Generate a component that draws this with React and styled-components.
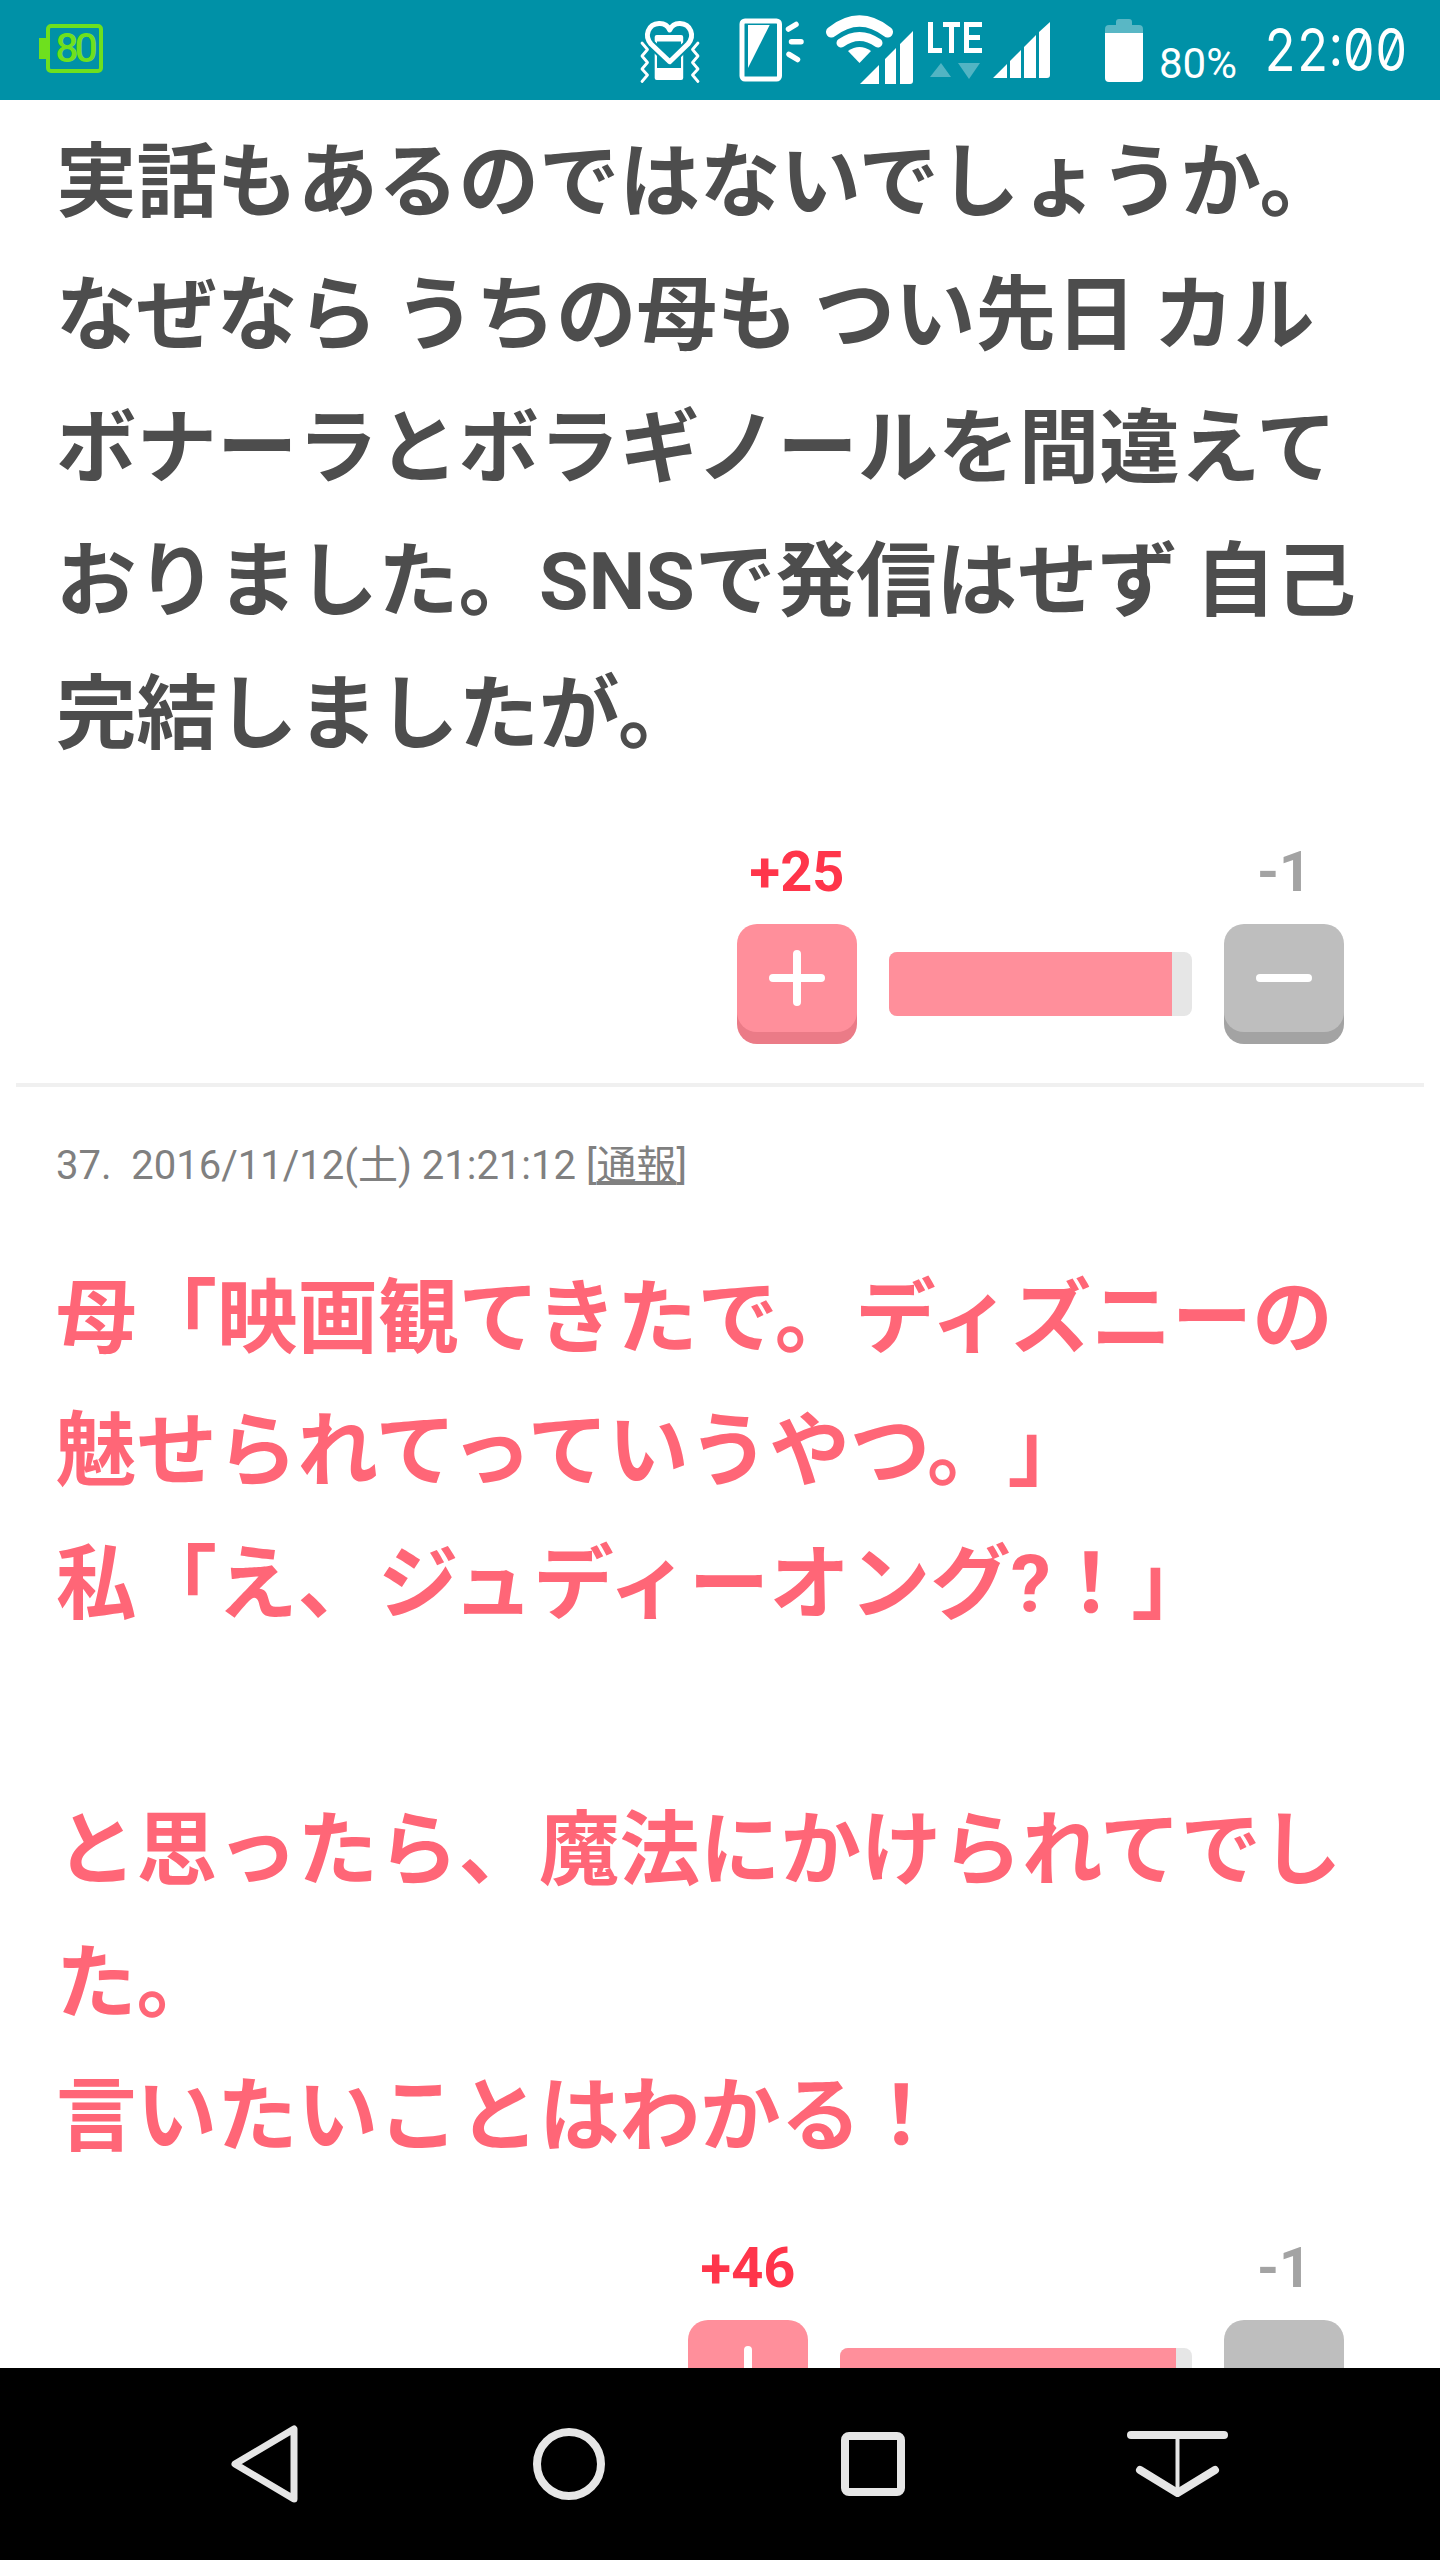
import React from "react";
import styled, { createGlobalStyle } from "styled-components";

const GlobalStyle = createGlobalStyle`
  html, body {
    margin: 0;
    padding: 0;
    background: #fff;
  }
`;

const Screen = styled.div`
  display: flex;
  flex-direction: column;
  width: 1440px;
  height: 2560px;
  overflow: hidden;
  font-family: "Roboto", "Noto Sans CJK JP", sans-serif;
`;

const StatusBar = styled.div`
  flex: none;
  display: flex;
  align-items: flex-start;
  height: 100px;
  padding: 18px 36px 0 39px;
  box-sizing: border-box;
  background: #0091a7;
  color: #fff;
`;

const GreenBattery = styled.div`
  display: flex;
  align-items: center;
  margin-top: 6px;
`;

const BatteryNub = styled.div`
  width: 7px;
  height: 21px;
  background: #6ee01e;
`;

const BatteryBody = styled.div`
  display: flex;
  align-items: center;
  justify-content: center;
  width: 57px;
  height: 49px;
  box-sizing: border-box;
  border: 4px solid #6ee01e;
  border-radius: 5px;
  color: #6ee01e;
  font-size: 41px;
  font-weight: 500;
  letter-spacing: -4px;
  line-height: 1;
`;

const Spacer = styled.div`
  flex: 1;
`;

const StatusIcon = styled.svg`
  flex: none;
  display: block;
  margin-left: ${(props) => props.$ml || 0}px;
  margin-top: ${(props) => props.$mt || 0}px;
`;

const StatusPercent = styled.div`
  margin: 25px 0 0 16px;
  font-size: 42px;
  line-height: 42px;
`;

const StatusClock = styled.div`
  width: 140px;
  margin: 1px 0 0 27px;
  font-family: "Inter", sans-serif;
  font-size: 59px;
  font-weight: 400;
  font-feature-settings: "zero", "tnum";
  line-height: 62px;
  white-space: nowrap;
  transform: scaleX(0.85);
  transform-origin: left center;
`;

const Content = styled.div`
  flex: 1;
  min-height: 0;
  overflow: hidden;
  padding-top: 16px;
`;

const Comment = styled.div`
  margin: 0 0 0 56px;
  color: ${(props) => props.$color};
  font-size: 80.5px;
  font-weight: 700;
  line-height: 133px;
  word-spacing: -3px;
  text-spacing-trim: space-all;
  white-space: nowrap;
`;

const VoteBlock = styled.div`
  display: flex;
  justify-content: flex-end;
  align-items: flex-start;
  gap: 32px;
  padding: ${(props) => props.$top}px 96px 0 0;
`;

const VoteColumn = styled.div`
  display: flex;
  flex-direction: column;
  align-items: center;
  width: 120px;
`;

const VoteCount = styled.div`
  height: 66px;
  margin-bottom: 21px;
  color: ${(props) => props.$color};
  font-size: 56px;
  font-weight: 700;
  line-height: 70px;
`;

const VoteButton = styled.div`
  display: flex;
  align-items: center;
  justify-content: center;
  width: 120px;
  height: 108px;
  border-radius: 20px;
  background: ${(props) => props.$color};
  box-shadow: 0 12px 0 ${(props) => props.$shade};
  margin-bottom: 12px;
`;

const ScoreBar = styled.div`
  flex: none;
  width: ${(props) => props.$width}px;
  height: 64px;
  margin-top: 115px;
  border-radius: 8px;
  overflow: hidden;
  background: #e6e6e6;
`;

const ScoreFill = styled.div`
  height: 100%;
  background: #ff8f9b;
`;

const Divider = styled.div`
  height: 4px;
  margin: 39px 16px 0;
  background: #f0f0f0;
`;

const CommentMeta = styled.div`
  margin: 49px 0 56px 56px;
  color: #808080;
  font-size: 40px;
  line-height: 60px;
  white-space: nowrap;

  & a {
    color: inherit;
    text-decoration: underline;
  }
`;

const NavBar = styled.div`
  flex: none;
  display: flex;
  align-items: center;
  height: 192px;
  padding-left: 230px;
  background: #000;
`;

const NavIcon = styled.svg`
  flex: none;
  display: block;
  margin-left: ${(props) => props.$ml || 0}px;
`;

function HeartPhoneIcon() {
  const heart =
    "M30.700 41.700 12 24C5 16 9 4 20 3.500 25 3.300 29 6 30.700 10 32.500 6 36 3.300 41 3.500 52 4 56 16 49 24z";
  return (
    <StatusIcon width="63" height="64" viewBox="0 0 63 64" $mt={2}>
      <rect x="15.700" y="15" width="28.500" height="45" rx="2" fill="#fff" />
      <rect x="18" y="21.500" width="24" height="26.500" fill="#0091a7" />
      <path d={heart} fill="none" stroke="#0091a7" strokeWidth="9" strokeLinejoin="round" />
      <path d={heart} fill="none" stroke="#fff" strokeWidth="5" strokeLinejoin="round" />
      <path
        d="M3 23l5.500 6.500L3 36l5.500 6.500L3 49l5.500 6L3 61.500M59 23l-5.500 6.500L59 36l-5.500 6.500L59 49l-5.500 6 5.500 6.500"
        fill="none"
        stroke="#fff"
        strokeWidth="2.800"
        strokeLinecap="round"
        strokeLinejoin="round"
      />
    </StatusIcon>
  );
}

function RotateIcon() {
  return (
    <StatusIcon width="65" height="64" viewBox="0 0 65 64" $ml={37}>
      <rect x="3" y="3" width="37.500" height="58" rx="3" fill="none" stroke="#fff" strokeWidth="5" />
      <path d="M9 50V7h21.700z" fill="#fff" />
      <path
        d="M49.500 11 57 6.500M52.500 23.700h9.500M50 36.300 58.500 41.500"
        fill="none"
        stroke="#fff"
        strokeWidth="5.500"
        strokeLinecap="round"
      />
    </StatusIcon>
  );
}

function WifiIcon() {
  return (
    <StatusIcon width="87" height="71" viewBox="0 0 87 71" $ml={22} $mt={-4}>
      <path
        d="M5.500 18Q33.500-4 61.500 18"
        fill="none"
        stroke="#fff"
        strokeWidth="11"
        strokeLinecap="round"
      />
      <path
        d="M15 29Q33.500 16 52 29"
        fill="none"
        stroke="#fff"
        strokeWidth="9"
        strokeLinecap="round"
      />
      <path d="M22 37Q33.500 29 45 37L33.500 49z" fill="#fff" />
      <path
        d="M34 70 53 51v19zM59 45 70 34v36H59zM74 30 87 17v50a3 3 0 0 1-3 3H74z"
        fill="#fff"
      />
    </StatusIcon>
  );
}

function LteIcon() {
  return (
    <StatusIcon width="56" height="60" viewBox="0 0 56 60" $ml={14} $mt={4}>
      <path
        d="M1 0h5v26h9v5H1zM16 0h17v5h-6v26h-5V5h-6zM37 0h18v5H42v8h11v5H42v8h13v5H37z"
        fill="#fff"
      />
      <path d="M14 41l10 14H3z" fill="#fff" opacity="0.32" />
      <path d="M31 41h22L42 57z" fill="#fff" opacity="0.32" />
    </StatusIcon>
  );
}

function SignalIcon() {
  return (
    <StatusIcon width="58" height="57" viewBox="0 0 58 57" $ml={10} $mt={4}>
      <path
        d="M0 56 14 42v14zM17 39 28 28v28H17zM31 25 43 13v43H31zM46 10 57 0v53a3 3 0 0 1-3 3h-8z"
        fill="#fff"
      />
    </StatusIcon>
  );
}

function PhoneBatteryIcon() {
  return (
    <StatusIcon width="38" height="63" viewBox="0 0 38 63" $ml={54} $mt={1}>
      <path
        d="M11 3a3 3 0 0 1 3-3h10a3 3 0 0 1 3 3v3h7a4 4 0 0 1 4 4v4H0v-4a4 4 0 0 1 4-4h7z"
        fill="#fff"
        opacity="0.35"
      />
      <path d="M0 14h38v45a4 4 0 0 1-4 4H4a4 4 0 0 1-4-4z" fill="#fff" />
    </StatusIcon>
  );
}

function BackIcon() {
  return (
    <NavIcon width="68" height="78" viewBox="0 0 68 78" fill="none">
      <path d="M64 4v70L5 39z" stroke="#e6e6e6" strokeWidth="7" strokeLinejoin="round" />
    </NavIcon>
  );
}

function HomeIcon() {
  return (
    <NavIcon width="72" height="72" viewBox="0 0 72 72" fill="none" $ml={235}>
      <circle cx="36" cy="36" r="32" stroke="#e6e6e6" strokeWidth="8" />
    </NavIcon>
  );
}

function RecentsIcon() {
  return (
    <NavIcon width="64" height="64" viewBox="0 0 64 64" fill="none" $ml={236}>
      <rect x="4" y="4" width="56" height="56" rx="4" stroke="#e6e6e6" strokeWidth="8" />
    </NavIcon>
  );
}

function HideBarIcon() {
  return (
    <NavIcon width="101" height="66" viewBox="0 0 101 66" fill="none" $ml={222}>
      <path d="M4 4h93" stroke="#e6e6e6" strokeWidth="8" strokeLinecap="round" />
      <path d="M50.500 8v52" stroke="#e6e6e6" strokeWidth="4" />
      <path d="M13 39 50.500 62 88 39" stroke="#e6e6e6" strokeWidth="8" strokeLinecap="round" />
    </NavIcon>
  );
}

function Votes({ top, plus, minus, barWidth, fillWidth }) {
  return (
    <VoteBlock $top={top}>
      <VoteColumn>
        <VoteCount $color="#ff354a">{plus}</VoteCount>
        <VoteButton $color="#ff8f9b" $shade="#eb7b87">
          <svg width="56" height="56" viewBox="0 0 56 56" fill="none">
            <path d="M28 4v48M4 28h48" stroke="#fff" strokeWidth="8" strokeLinecap="round" />
          </svg>
        </VoteButton>
      </VoteColumn>
      <ScoreBar $width={barWidth}>
        <ScoreFill style={{ width: fillWidth }} />
      </ScoreBar>
      <VoteColumn>
        <VoteCount $color="#a3a3a3">{minus}</VoteCount>
        <VoteButton $color="#bebebe" $shade="#a3a3a3">
          <svg width="56" height="12" viewBox="0 0 56 12" fill="none">
            <path d="M4 6h48" stroke="#fff" strokeWidth="8" strokeLinecap="round" />
          </svg>
        </VoteButton>
      </VoteColumn>
    </VoteBlock>
  );
}

export default function App() {
  return (
    <>
      <GlobalStyle />
      <Screen>
        <StatusBar>
          <GreenBattery>
            <BatteryNub />
            <BatteryBody>80</BatteryBody>
          </GreenBattery>
          <Spacer />
          <HeartPhoneIcon />
          <RotateIcon />
          <WifiIcon />
          <LteIcon />
          <SignalIcon />
          <PhoneBatteryIcon />
          <StatusPercent>80%</StatusPercent>
          <StatusClock>22:00</StatusClock>
        </StatusBar>
        <Content>
          <Comment $color="#4d4d4d">
            実話もあるのではないでしょうか。
            <br />
            なぜなら うちの母も つい先日 カル
            <br />
            ボナーラとボラギノールを間違えて
            <br />
            おりました。SNSで発信はせず 自己
            <br />
            完結しましたが。
          </Comment>
          <Votes top={56} plus="+25" minus="-1" barWidth={303} fillWidth={283} />
          <Divider />
          <CommentMeta>
            37.&nbsp; 2016/11/12(土) 21:21:12 [<a href="#report">通報</a>]
          </CommentMeta>
          <Comment $color="#ff6677">
            母「映画観てきたで。ディズニーの
            <br />
            魅せられてっていうやつ。」
            <br />
            私「え、ジュディーオング?！」
            <br />
            <br />
            と思ったら、魔法にかけられてでし
            <br />
            た。
            <br />
            言いたいことはわかる！
          </Comment>
          <Votes top={50} plus="+46" minus="-1" barWidth={352} fillWidth={336} />
        </Content>
        <NavBar>
          <BackIcon />
          <HomeIcon />
          <RecentsIcon />
          <HideBarIcon />
        </NavBar>
      </Screen>
    </>
  );
}
